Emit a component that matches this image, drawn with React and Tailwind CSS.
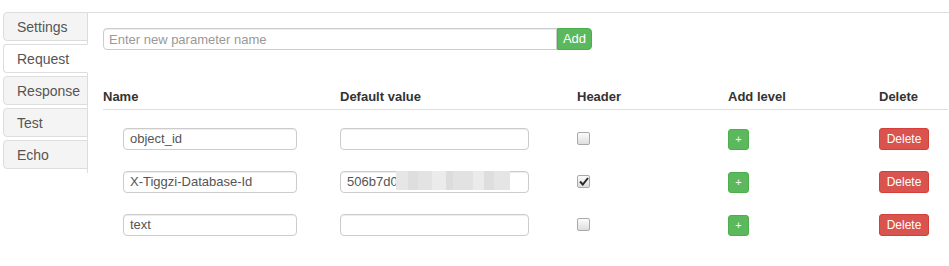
import { useState } from "react";

const tabs = ["Settings", "Request", "Response", "Test", "Echo"];

const rows = [
  { name: "object_id", value: "", header: false },
  { name: "X-Tiggzi-Database-Id", value: "506b7d0", header: true, masked: true },
  { name: "text", value: "", header: false },
];

const Checkbox = ({ checked }) => (
  <span className="flex items-center justify-center w-[13px] h-[13px] rounded-[2px] border border-[#a9a9a9] bg-gradient-to-b from-[#fcfcfc] to-[#dedede]">
    {checked && (
      <svg width="10" height="9" viewBox="0 0 10 9">
        <path d="M1 4.5 L3.8 7.5 L9 1" fill="none" stroke="#2b2b2b" strokeWidth="2" />
      </svg>
    )}
  </span>
);

export default function App() {
  const [active, setActive] = useState("Request");
  return (
    <div className="w-[949px] h-[266px] bg-white flex font-['Liberation_Sans',Arial,sans-serif] text-[#333]">
      {/* tabs */}
      <div className="w-[88px] pl-[3px] pt-[12px] shrink-0">
        <div className="border-r border-[#ddd] pb-[1px]">
          {tabs.map((t) => (
            <button
              key={t}
              onClick={() => setActive(t)}
              className={`block w-[85px] h-[29px] mb-[3px] text-left pl-[13px] pt-[2px] text-[14px] rounded-l-[4px] border border-[#ddd] ${
                active === t
                  ? "bg-white text-[#555] border-r-white -mr-[1px]"
                  : "bg-[#f4f4f4] text-[#555]"
              }`}
            >
              {t}
            </button>
          ))}
        </div>
      </div>

      {/* content */}
      <div className="flex-1 mt-[12px] border-t border-[#ddd] pl-[15px] pr-[1px]">
        <div className="flex mt-[15px]">
          <input
            placeholder="Enter new parameter name"
            className="w-[454px] h-[22px] px-[5px] text-[13px] border border-[#ccc] rounded-l-[4px] outline-none placeholder:text-[#999] shadow-[inset_0_1px_1px_rgba(0,0,0,0.075)]"
          />
          <button className="w-[35px] h-[22px] text-[13px] text-white bg-[#5cb85c] border border-[#4cae4c] rounded-r-[4px]">
            Add
          </button>
        </div>

        <div className="grid grid-cols-[237px_237px_151px_151px_1fr] mt-[37px] pb-[3px] border-b border-[#ddd] text-[13px] font-bold leading-[19px]">
          <div>Name</div>
          <div>Default value</div>
          <div>Header</div>
          <div>Add level</div>
          <div>Delete</div>
        </div>

        <div className="pt-[16px] flex flex-col gap-[21px]">
          {rows.map((r) => (
            <div key={r.name} className="grid grid-cols-[237px_237px_151px_151px_1fr] items-center h-[22px]">
              <div className="pl-[20px]">
                <input
                  defaultValue={r.name}
                  className="w-[174px] h-[22px] px-[6px] text-[13px] text-[#555] border border-[#ccc] rounded-[4px] outline-none shadow-[inset_0_1px_1px_rgba(0,0,0,0.075)]"
                />
              </div>
              <div className="relative">
                <input
                  defaultValue={r.value}
                  className="w-[189px] h-[22px] px-[6px] text-[13px] text-[#555] border border-[#ccc] rounded-[4px] outline-none shadow-[inset_0_1px_1px_rgba(0,0,0,0.075)]"
                />
                {r.masked && (
                  <div className="absolute left-[56px] top-[2px] h-[19px] flex">
                    <div className="w-[12px] bg-[#e6e6e6]" />
                    <div className="w-[10px] bg-[#dedede]" />
                    <div className="w-[14px] bg-[#e3e3e3]" />
                    <div className="w-[14px] bg-[#ebebeb]" />
                    <div className="w-[7px] bg-[#dcdcdc]" />
                    <div className="w-[20px] bg-[#e2e2e2]" />
                    <div className="w-[11px] bg-[#ebebeb]" />
                    <div className="w-[10px] bg-[#dedede]" />
                    <div className="w-[16px] bg-[#e5e5e5]" />
                  </div>
                )}
              </div>
              <div>
                <Checkbox checked={r.header} />
              </div>
              <div>
                <button className="w-[21px] h-[21px] text-[11px] leading-none text-white bg-[#5cb85c] border border-[#4cae4c] rounded-[3px]">
                  +
                </button>
              </div>
              <div>
                <button className="w-[50px] h-[22px] text-[12px] text-white bg-[#d9534f] border border-[#d43f3a] rounded-[3px]">
                  Delete
                </button>
              </div>
            </div>
          ))}
        </div>
      </div>
    </div>
  );
}
